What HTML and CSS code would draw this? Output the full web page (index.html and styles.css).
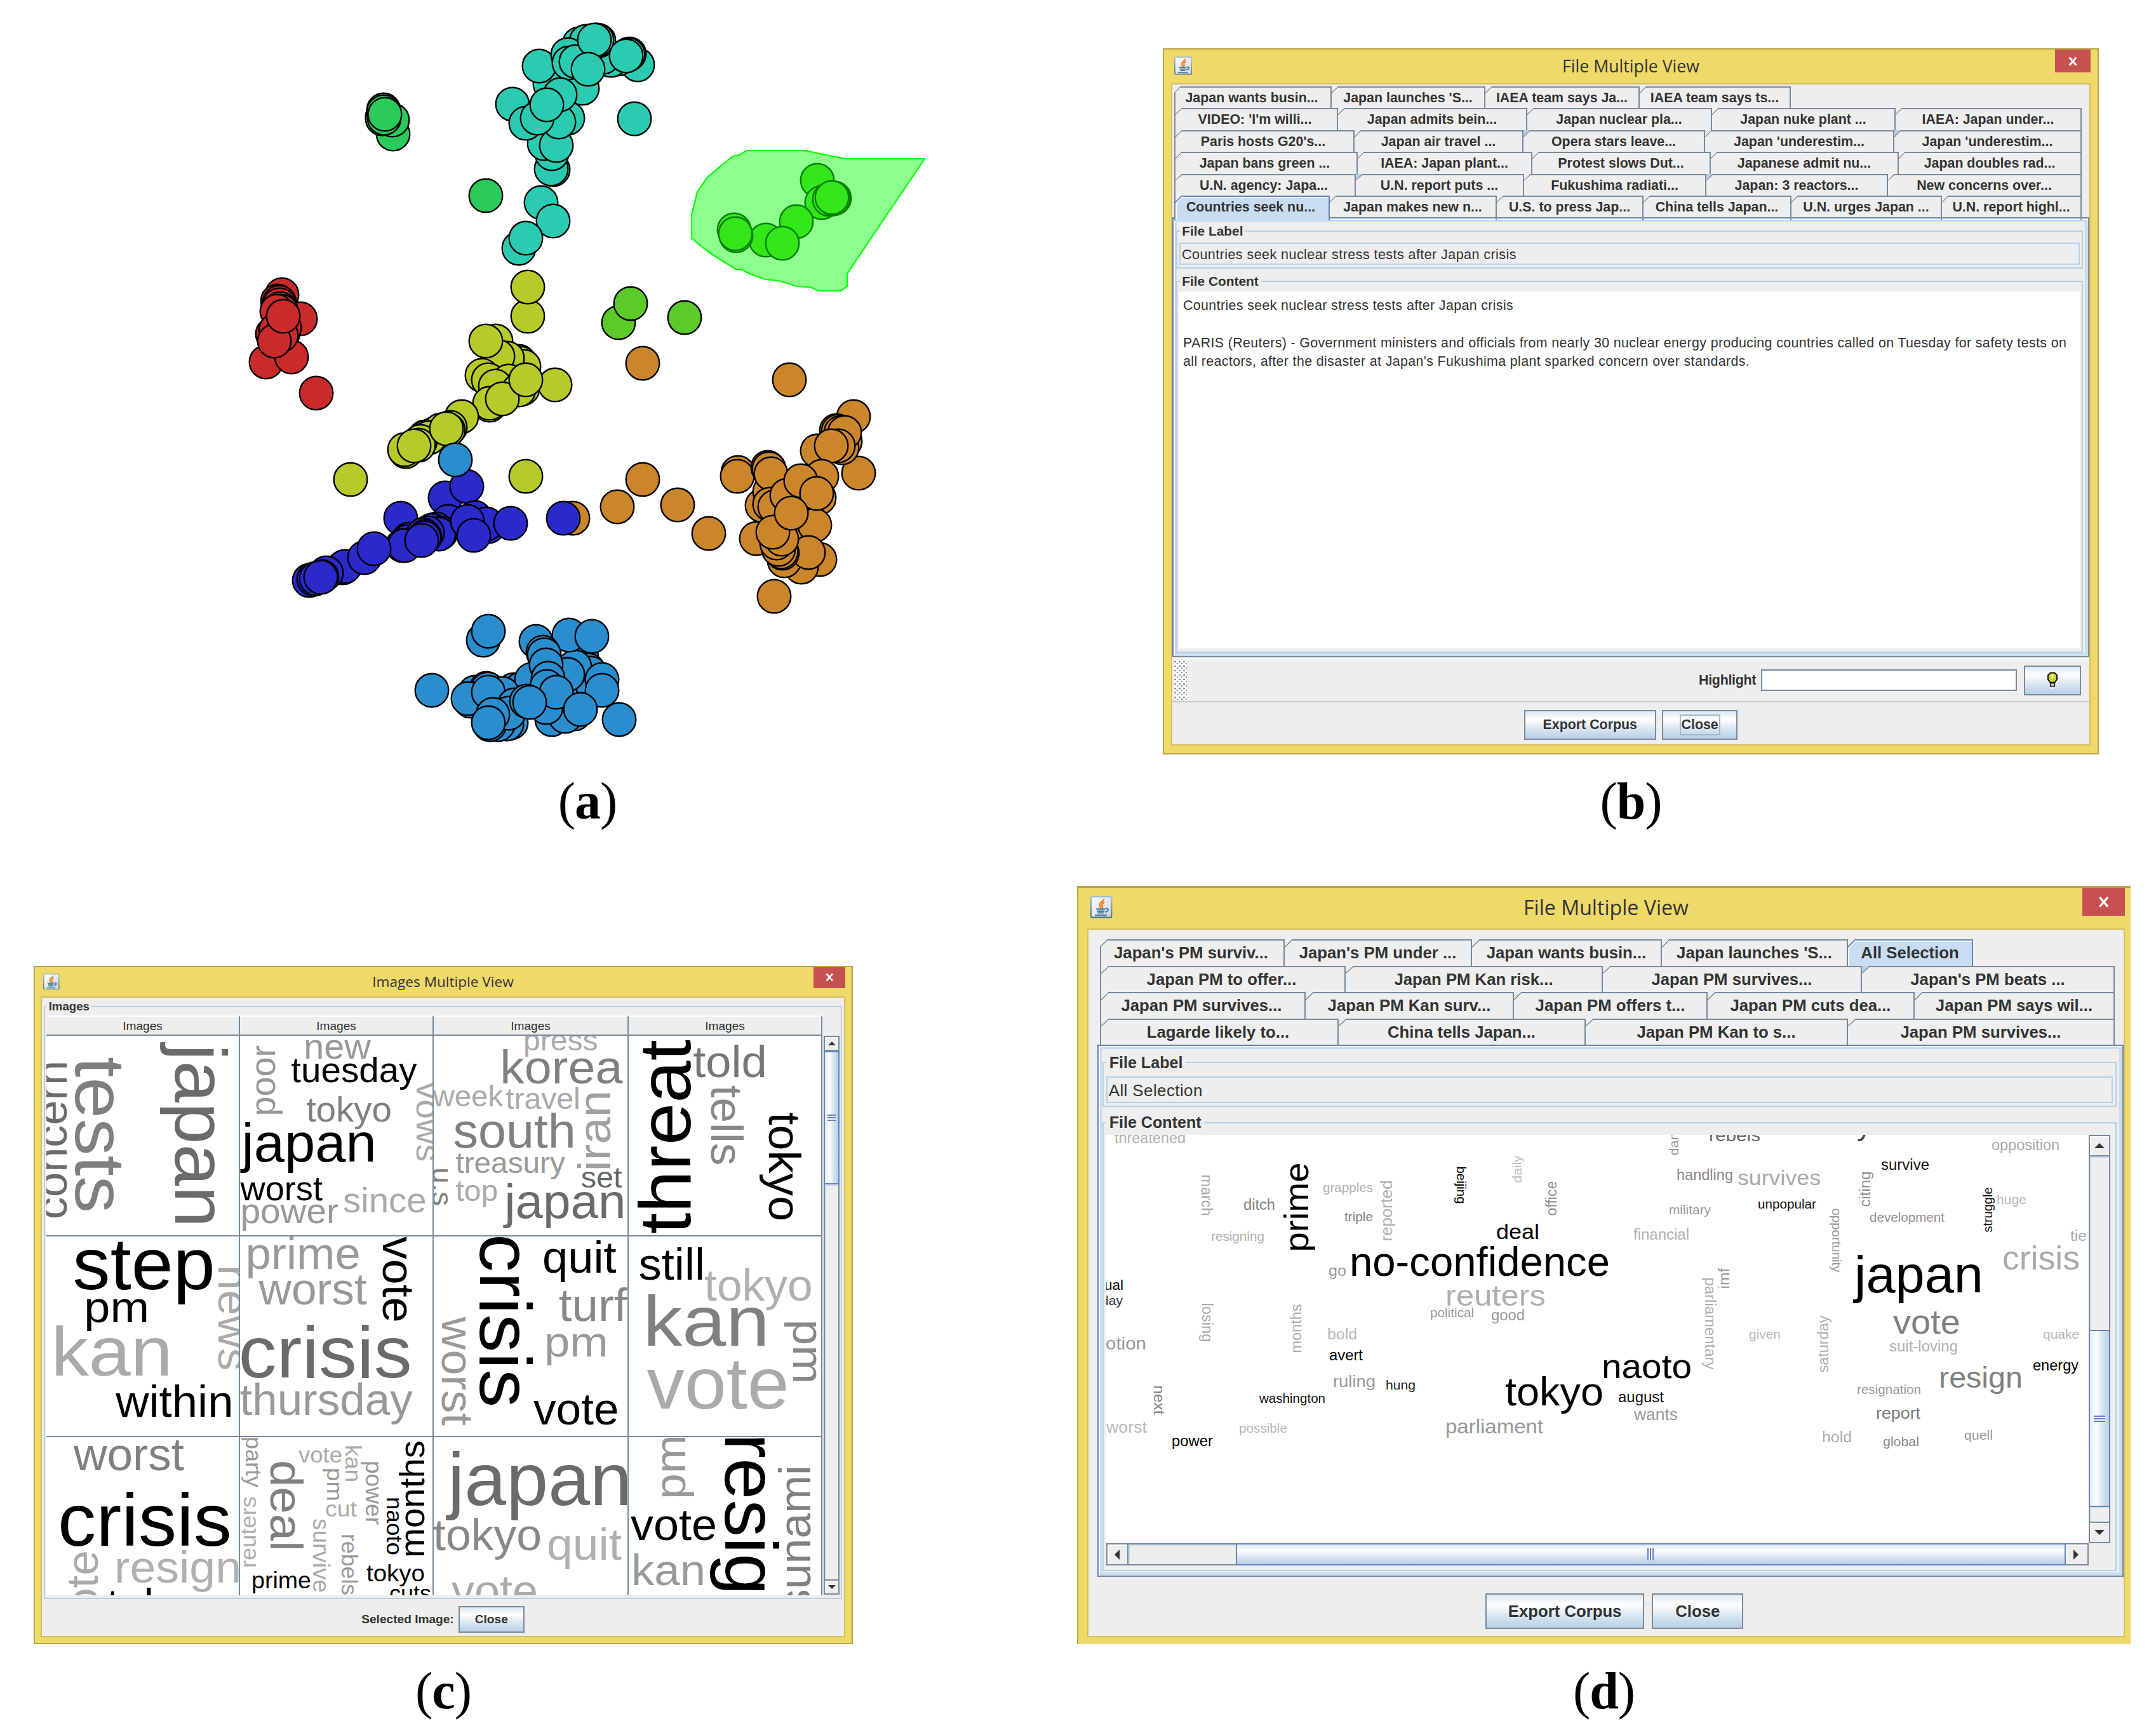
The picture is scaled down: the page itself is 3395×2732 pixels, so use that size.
FILE: index.html
```html
<!DOCTYPE html>
<html lang="en">
<head>
    <meta charset="UTF-8">
    <meta name="viewport" content="width=device-width, initial-scale=1.0">
    <title>Multiple View</title>
    <link rel="stylesheet" href="styles.css">
</head>
<body>
    <!-- shared icons -->
    <svg class="defs" width="0" height="0">
        <defs>
            <linearGradient id="javaBg" x1="0" y1="0" x2="1" y2="1">
                <stop offset="0" stop-color="#ffffff"/>
                <stop offset="1" stop-color="#cdd5dc"/>
            </linearGradient>
            <linearGradient id="javaEdge" x1="0" y1="0" x2="0" y2="1">
                <stop offset="0" stop-color="#a9bccb"/>
                <stop offset="1" stop-color="#4a6f8f"/>
            </linearGradient>
        </defs>
        <symbol id="java" viewBox="0 0 16 16">
            <rect x=".5" y=".5" width="15" height="15" rx="1" fill="url(#javaBg)" stroke="url(#javaEdge)"/>
            <path d="M9.800 2.200C9.400 4 6.200 4.800 6.600 6.600c.2.8.9 1.300.8 2.200M10.200 4.400C8.600 5.200 8 6 8.600 7c.5.8.1 1.300-.4 1.800" fill="none" stroke="#e8822a" stroke-width="1.200"/>
            <path d="M4.300 9.500h6.400M4.800 11h5.400M5.300 12.200h4.300M3.200 14h8.800M11 9.200c2.600-.6 2.400 2-.4 2.300" fill="none" stroke="#5382a1" stroke-width="1.100"/>
        </symbol>
        <symbol id="bulb" viewBox="0 0 12 16">
            <path d="M4 .8h4L10.200 3v4L8 10H4L1.800 7V3z" fill="#d3d32c" stroke="#111" stroke-width="1.200"/>
            <path d="M5 2.500h2v3H5z" fill="#f7f7b0"/>
            <path d="M4 10.500h4v3H4z" fill="#e8c8b8" stroke="#222" stroke-width="1"/>
            <path d="M4.500 15.200h3" stroke="#fff" stroke-width="1"/>
        </symbol>
        <symbol id="close" viewBox="0 0 10 10">
            <path d="M1.500 1l7 8M8.500 1l-7 8" stroke="#fff" stroke-width="1.900"/>
        </symbol>
    </svg>

    <div class="figures">
        <figure class="fig-a">
            <svg id="plot" class="plot" viewBox="380 0 1090 1188">
                <polygon class="lasso" points="1176,237 1267,237 1331,250 1456,250 1334,431 1334,451 1324,458 1289,458 1276,452 1255,451 1226,442 1205,440 1180,431 1169,425 1159,424 1144,415 1119,399 1103,387 1089,375 1089,339 1098,302 1114,279 1134,262 1154,246 1164,244"/>
            </svg>
            <figcaption>(<b>a</b>)</figcaption>
        </figure>

        <figure class="fig-b">
            <div class="window">
                <div class="titlebar">
                    <svg class="app-icon"><use href="#java"/></svg>
                    <span class="title">File Multiple View</span>
                    <span class="close"><svg><use href="#close"/></svg></span>
                </div>
                <div class="client">
                    <div class="tabs">
                        <div class="row b1"><span class="tab">Japan wants busin...</span><span class="tab">Japan launches 'S...</span><span class="tab">IAEA team says Ja...</span><span class="tab">IAEA team says ts...</span></div>
                        <div class="row b2"><span class="tab">VIDEO: 'I'm willi...</span><span class="tab">Japan admits bein...</span><span class="tab">Japan nuclear pla...</span><span class="tab">Japan nuke plant ...</span><span class="tab">IAEA: Japan under...</span></div>
                        <div class="row b3"><span class="tab">Paris hosts G20's...</span><span class="tab">Japan air travel ...</span><span class="tab tint">Opera stars leave...</span><span class="tab">Japan 'underestim...</span><span class="tab tint">Japan 'underestim...</span></div>
                        <div class="row b4"><span class="tab">Japan bans green ...</span><span class="tab">IAEA: Japan plant...</span><span class="tab">Protest slows Dut...</span><span class="tab">Japanese admit nu...</span><span class="tab">Japan doubles rad...</span></div>
                        <div class="row b5"><span class="tab">U.N. agency: Japa...</span><span class="tab tint">U.N. report puts ...</span><span class="tab">Fukushima radiati...</span><span class="tab tint">Japan: 3 reactors...</span><span class="tab">New concerns over...</span></div>
                        <div class="row b6"><span class="tab active">Countries seek nu...</span><span class="tab">Japan makes new n...</span><span class="tab">U.S. to press Jap...</span><span class="tab">China tells Japan...</span><span class="tab">U.N. urges Japan ...</span><span class="tab">U.N. report highl...</span></div>
                    </div>
                    <div class="panel">
                        <fieldset class="label-box">
                            <legend>File Label</legend>
                            <div class="field">Countries seek nuclear stress tests after Japan crisis</div>
                        </fieldset>
                        <fieldset class="content-box">
                            <legend>File Content</legend>
                            <div class="article">
                                <p>Countries seek nuclear stress tests after Japan crisis</p>
                                <p class="lead">PARIS (Reuters) - Government ministers and officials from nearly 30 nuclear energy producing countries called on Tuesday for safety tests on</p>
                                <p>all reactors, after the disaster at Japan's Fukushima plant sparked concern over standards.</p>
                            </div>
                        </fieldset>
                    </div>
                    <div class="toolbar">
                        <span class="grip"></span>
                        <label>Highlight</label>
                        <span class="input"></span>
                        <span class="button bulb"><svg><use href="#bulb"/></svg></span>
                    </div>
                    <div class="buttons">
                        <span class="button export">Export Corpus</span>
                        <span class="button ok"><span class="focus">Close</span></span>
                    </div>
                </div>
            </div>
            <figcaption>(<b>b</b>)</figcaption>
        </figure>

        <figure class="fig-c">
            <div class="window">
                <div class="titlebar">
                    <svg class="app-icon"><use href="#java"/></svg>
                    <span class="title">Images Multiple View</span>
                    <span class="close"><svg><use href="#close"/></svg></span>
                </div>
                <div class="client">
                    <fieldset class="images-box">
                        <legend>Images</legend>
                        <div class="images">
                            <div class="table">
                                <div class="th">Images</div>
                                <div class="th">Images</div>
                                <div class="th">Images</div>
                                <div class="th">Images</div>
                                <div class="td"><svg data-cloud="c11" viewBox="74 1631 303 315"></svg></div>
                                <div class="td"><svg data-cloud="c12" viewBox="379 1631 303 315"></svg></div>
                                <div class="td"><svg data-cloud="c13" viewBox="684 1631 305 315"></svg></div>
                                <div class="td"><svg data-cloud="c14" viewBox="991 1631 303 315"></svg></div>
                                <div class="td"><svg data-cloud="c21" viewBox="74 1947 303 315"></svg></div>
                                <div class="td"><svg data-cloud="c22" viewBox="379 1947 303 315"></svg></div>
                                <div class="td"><svg data-cloud="c23" viewBox="684 1947 305 315"></svg></div>
                                <div class="td"><svg data-cloud="c24" viewBox="991 1947 303 315"></svg></div>
                                <div class="td"><svg data-cloud="c31" viewBox="74 2263 303 249"></svg></div>
                                <div class="td"><svg data-cloud="c32" viewBox="379 2263 303 249"></svg></div>
                                <div class="td"><svg data-cloud="c33" viewBox="684 2263 305 249"></svg></div>
                                <div class="td"><svg data-cloud="c34" viewBox="991 2263 303 249"></svg></div>
                            </div>
                            <div class="vbar">
                                <span class="arrow up"></span>
                                <span class="thumb"></span>
                                <span class="track"></span>
                                <span class="arrow down"></span>
                            </div>
                        </div>
                    </fieldset>
                    <div class="buttons">
                        <span>Selected Image:</span>
                        <span class="button ok">Close</span>
                    </div>
                </div>
            </div>
            <figcaption>(<b>c</b>)</figcaption>
        </figure>

        <figure class="fig-d">
            <div class="window">
                <div class="titlebar">
                    <svg class="app-icon"><use href="#java"/></svg>
                    <span class="title">File Multiple View</span>
                    <span class="close"><svg><use href="#close"/></svg></span>
                </div>
                <div class="client">
                    <div class="tabs">
                        <div class="row d1"><span class="tab">Japan's PM surviv...</span><span class="tab">Japan's PM under ...</span><span class="tab">Japan wants busin...</span><span class="tab">Japan launches 'S...</span><span class="tab active">All Selection</span></div>
                        <div class="row d2"><span class="tab">Japan PM to offer...</span><span class="tab">Japan PM Kan risk...</span><span class="tab">Japan PM survives...</span><span class="tab tint">Japan's PM beats ...</span></div>
                        <div class="row d3"><span class="tab">Japan PM survives...</span><span class="tab">Japan PM Kan surv...</span><span class="tab">Japan PM offers t...</span><span class="tab">Japan PM cuts dea...</span><span class="tab">Japan PM says wil...</span></div>
                        <div class="row d4"><span class="tab">Lagarde likely to...</span><span class="tab">China tells Japan...</span><span class="tab">Japan PM Kan to s...</span><span class="tab">Japan PM survives...</span></div>
                    </div>
                    <div class="panel">
                        <fieldset class="label-box">
                            <legend>File Label</legend>
                            <div class="field">All Selection</div>
                        </fieldset>
                        <fieldset class="content-box">
                            <legend>File Content</legend>
                            <div class="scrollpane">
                                <svg class="cloud" data-cloud="d" viewBox="1742 1787 1547 642"></svg>
                                <div class="vbar">
                                    <span class="arrow up"></span>
                                    <span class="track"></span>
                                    <span class="thumb"></span>
                                    <span class="track rest"></span>
                                    <span class="arrow down"></span>
                                </div>
                                <div class="hbar">
                                    <span class="arrow left"></span>
                                    <span class="track"></span>
                                    <span class="thumb"></span>
                                    <span class="arrow right"></span>
                                </div>
                            </div>
                        </fieldset>
                    </div>
                    <div class="buttons">
                        <span class="button export">Export Corpus</span>
                        <span class="button ok">Close</span>
                    </div>
                </div>
            </div>
            <figcaption>(<b>d</b>)</figcaption>
        </figure>
    </div>
    <script src="script.js"></script>
</body>
</html>
```
FILE: styles.css
```css
* {
    box-sizing: border-box;
}

body {
    margin: 0;
    background: white;
    font-family: "Liberation Sans", Arial, sans-serif;
    color: #333;
}

.defs {
    position: absolute;
}

.figures {
    display: grid;
    grid-template-columns: 1600px 1795px;
    grid-template-rows: 1395px 1337px;
    width: 3395px;
    height: 2732px;
    overflow: hidden;
}

figure {
    margin: 0;
}
.fig-a { margin-left: 380px; width: 1090px; }
.fig-b { margin: 76px 0 0 231px; width: 1474px; --u: 1.8px; }
.fig-c { margin: 126px 0 0 53px; width: 1290px; --u: 1.61px; }
.fig-d { margin-left: 96px; width: 1659px; --u: 2.165px; }

figcaption {
    margin-top: 24px;
    font: 82px/100px "Liberation Serif", serif;
    letter-spacing: -1px;
    text-align: center;
    color: black;
}

/* scatter plot */
.plot {
    display: block;
    width: 1090px;
    height: 1188px;
}
.lasso {
    fill: #8cff8c;
    stroke: #00ff00;
    stroke-width: 2.200;
}
.plot circle {
    stroke: black;
    stroke-width: 2.400;
}
.plot .selected circle {
    stroke: #007f00;
}

/* window frame */
.window {
    background: #efd969;
    border: 2px solid #b8a549;
    padding: 0 11px 12px;
    font-size: calc(var(--u) * 11.880);
    font-weight: bold;
}
.fig-b .window { height: 1112px; }
.fig-c .window { height: 1068px; padding: 0 10px 9px 9px; }
.fig-d .window { height: 1194px; border-width: 3px 0 0 2px; padding: 0 9px 11px 14px; }

.titlebar {
    display: grid;
    grid-template-columns: 1fr auto 1fr;
    height: 53px;
}
.fig-c .titlebar { height: 46px; }
.fig-d .titlebar { height: 64px; }

.app-icon {
    width: calc(var(--u) * 16);
    height: calc(var(--u) * 16);
    margin: calc(var(--u) * 6) 0 0 calc(var(--u) * 2.500);
}
.title {
    font: calc(var(--u) * 14.850)/calc(var(--u) * 28.600) "Open Sans", sans-serif;
    white-space: nowrap;
}
.fig-c .title {
    font-size: 22.600px;
}
.close {
    justify-self: end;
    display: flex;
    align-items: center;
    justify-content: center;
    width: calc(var(--u) * 31);
    height: calc(var(--u) * 20.200);
    background: #c75050;
}
.close svg {
    width: calc(var(--u) * 9);
    height: calc(var(--u) * 8.500);
}

.client {
    height: 1043px;
    background: #eee;
    border: 2px solid #d2bf5e;
}
.fig-c .client { height: 1009px; }
.fig-d .client { height: 1116px; }

/* tabs */
.tabs {
    padding: 3px 0 0 3px;
}
.fig-d .tabs { padding: 15px 0 0 18px; }

.row {
    display: grid;
    height: 34.400px;
    line-height: 32px;
}
.fig-d .row {
    height: 41.500px;
    line-height: 38px;
}
.b1 { grid-template-columns: 248px 242px 243px 238px; }
.b2 { grid-template-columns: 258px 298px 291px 289px 293px; }
.b3 { grid-template-columns: 284px 266px 286px 298px 295px; }
.b4 { grid-template-columns: 289px 275px 281px 296px 288px; }
.b5 { grid-template-columns: 286px 265px 287px 286px 305px; }
.b6 { grid-template-columns: 245px 263px 231px 233px 237px 220px; }
.d1 { grid-template-columns: 291px 295px 299px 293px 197px; }
.d2 { grid-template-columns: 387px 405px 408px 398px; }
.d3 { grid-template-columns: 324px 328px 305px 326px 315px; }
.d4 { grid-template-columns: 376px 389px 413px 420px; }

.tab {
    position: relative;
    border-top: 2px solid #7a8a99;
    border-right: 2px solid #7a8a99;
    text-align: center;
    white-space: pre;
}
.tab:first-child {
    border-left: 2px solid #7a8a99;
    padding-right: 4px;
}
/* cut top left corner */
.tab::before {
    content: "";
    position: absolute;
    left: 0;
    top: -2px;
    width: calc(var(--u) * 6);
    height: calc(var(--u) * 6);
    background: linear-gradient(to bottom right, #eee 44%, #7a8a99 46%, #7a8a99 52%, transparent 54%);
}
.row:first-child .tab:first-child::before {
    left: -2px;
}
.tab.tint::before {
    background: linear-gradient(to bottom right, #b8cfe5 44%, #7a8a99 46%, #7a8a99 52%, transparent 54%);
}
.tab.active {
    background: #c8ddf2;
    border-color: #6382bf;
    box-shadow: inset 2px 2px 0 white;
}
.tab.active::before {
    background: linear-gradient(to bottom right, #eee 40%, #6382bf 43%, #6382bf 50%, white 52%, white 58%, transparent 60%);
}
.b6 .tab.active {
    height: 39px;
    z-index: 1;
}

.panel {
    height: 693px;
    padding: 8px 8px 0 4px;
    border: 2px solid #6382bf;
    border-right-color: #7a8a99;
    border-bottom-color: #7a8a99;
    box-shadow: inset 2px 2px 0 white, inset 0 0 0 5px #c8ddf2;
}
.fig-d .panel {
    width: 1616px;
    height: 838px;
    margin-left: 14px;
    padding: 12px 9px 0 6px;
}

fieldset {
    min-width: 0;
    margin: 0;
    border: 2px solid #b8cfe5;
    padding: calc(var(--u) * 3.200) calc(var(--u) * 1.700) 0;
}
legend {
    height: calc(var(--u) * 13.300);
    margin-left: calc(var(--u) * .3);
    padding: 0 calc(var(--u) * 2);
    font-size: calc(var(--u) * 11.600);
    line-height: calc(var(--u) * 13.300);
}
.label-box {
    height: calc(var(--u) * 39);
}
.field {
    height: calc(var(--u) * 19.400);
    padding-left: 2px;
    border: 2px solid #b8cfe5;
    line-height: calc(var(--u) * 18.600);
    font-weight: normal;
    font-size: calc(var(--u) * 12);
    letter-spacing: .4px;
}
.content-box {
    height: 597px;
    margin-top: 8px;
    padding-top: 5px;
}
.fig-d .content-box {
    height: 721px;
    margin-top: 10px;
}
.article {
    height: 562px;
    padding: 8px 6px;
    background: white;
    font-weight: normal;
    letter-spacing: .370px;
    line-height: 29.200px;
    white-space: nowrap;
}
.article p {
    margin: 0;
}
.article .lead {
    margin-top: 29px;
}

.toolbar {
    display: flex;
    align-items: center;
    height: 68px;
    margin-top: 1px;
    padding-right: 13px;
    border-top: 2px solid white;
}
.grip {
    align-self: stretch;
    width: 22px;
    margin: 2px auto 2px 3px;
    background: radial-gradient(circle at 1.500px 2px, #8a97a5 1.200px, transparent 1.600px) 0 0/7px 7px,
        radial-gradient(circle at 5px 5px, #8a97a5 1.200px, white 1.600px) 0 0/7px 7px;
}
.toolbar label {
    margin-right: 8px;
    letter-spacing: -.3px;
}
.input {
    width: 403px;
    height: 34px;
    margin-right: 11px;
    background: white;
    border: 2px solid #7a8a99;
}

.button {
    display: flex;
    align-items: center;
    justify-content: center;
    height: calc(var(--u) * 26);
    border: 2px solid #7a8a99;
    background: linear-gradient(#dde8f3, #ffffff 30%, #dde8f3 60%, #b8cfe5);
}
.button.bulb { width: 90px; }
.bulb svg { width: 20px; height: 27px; }
.button.export { width: calc(var(--u) * 115.700); }
.button.ok { width: calc(var(--u) * 66.400); }
.focus {
    padding: 2px 1px;
    border: 2px solid #a3b8cc;
}

.buttons {
    display: flex;
    justify-content: center;
    align-items: center;
    gap: 9px;
    padding-top: 12px;
    border-top: 2px solid #ccc;
}
.fig-c .buttons { gap: 7px; padding-top: 11px; border: none; }
.fig-c .button.ok { width: 104px; }
.fig-d .buttons { gap: 12px; padding: 26px 0 0 26px; border: none; }

/* image table */
.images-box {
    height: 944px;
    margin: 3px 3px 0;
    padding: 4px 2px 0;
}
.images {
    display: flex;
    height: 913px;
}
.table {
    display: grid;
    grid-template-columns: 305px 305px 307px 305px;
    grid-template-rows: 32px 316px 316px 249px;
    width: 1222px;
    background: white;
}
.th {
    background: #eee;
    border-top: 2px solid white;
    border-right: 2px solid #7a8a99;
    border-bottom: 2px solid #7a8a99;
    font-weight: normal;
    line-height: 29px;
    text-align: center;
}
.td {
    overflow: hidden;
    border-right: 2px solid #7a8a99;
    border-bottom: 2px solid #7a8a99;
}
.td:nth-child(n+13) {
    border-bottom: none;
}
.td svg {
    display: block;
    width: 100%;
    height: 100%;
}

/* scrollbars */
.scrollpane {
    display: grid;
    grid-template-columns: 1547px 34px;
    grid-template-rows: 643px 35px;
    width: 1581px;
}
.cloud {
    width: 1547px;
    height: 643px;
    background: white;
}
.vbar, .hbar {
    display: flex;
    border: 2px solid #7a8a99;
    background: #eee;
}
.vbar {
    flex-direction: column;
}
.fig-c .vbar {
    width: 25px;
    height: 880px;
    margin: 32px 0 0 2px;
}
.track {
    flex: 1;
    box-shadow: inset 2px 2px 0 #c8ddf2;
}
.thumb {
    position: relative;
    margin: 0 -2px;
    border: 2px solid #6382bf;
    background: linear-gradient(to right, #dde8f3, #ffffff 30%, #dde8f3 60%, #b8cfe5);
}
.hbar .thumb {
    width: 1307px;
    margin: -2px 0;
    background: linear-gradient(#dde8f3, #ffffff 30%, #dde8f3 60%, #b8cfe5);
}
.fig-c .thumb { height: 210px; }
.fig-d .vbar .thumb { height: 279px; }
.fig-d .track.rest { flex: 0 0 23px; }
.fig-d .hbar .track { flex: 0 0 169px; }

/* ridges in the middle of the thumb */
.thumb::after {
    content: "";
    position: absolute;
    left: 20%;
    right: 20%;
    top: 50%;
    height: 10px;
    margin-top: -5px;
    background: repeating-linear-gradient(#6382bf 0 2px, white 2px 4px);
}
.hbar .thumb::after {
    left: 50%;
    right: auto;
    top: 20%;
    bottom: 20%;
    width: 10px;
    height: auto;
    margin: 0 0 0 -5px;
    background: repeating-linear-gradient(to right, #6382bf 0 2px, white 2px 4px);
}

.arrow {
    display: flex;
    align-items: center;
    justify-content: center;
    height: 22px;
    box-shadow: inset 2px 2px 0 white;
}
.fig-d .arrow { height: 32px; }
.fig-d .hbar .arrow { width: 33px; height: auto; }
.arrow.up { border-bottom: 2px solid #7a8a99; }
.arrow.down { border-top: 2px solid #7a8a99; }
.arrow.left { border-right: 2px solid #7a8a99; }
.arrow::before {
    content: "";
    border: calc(var(--u) * 4) solid transparent;
}
.arrow.up::before { border-top: none; border-bottom-color: #333; }
.arrow.down::before { border-bottom: none; border-top-color: #333; }
.arrow.left::before { border-left: none; border-right-color: #333; }
.arrow.right::before { border-right: none; border-left-color: #333; }
```
FILE: script.js
```js
const NS = 'http://www.w3.org/2000/svg';

// [fill, [x, y], ...] drawn back to front
const groups = [
    ['#2acb5a', [619,211],[618,189],[604,173],[602,184],[602,187],[605,186],[604,176],[606,180],[765,308]],
    ['#2acbb1', [1004,102],[917,139],[866,132],[849,104],[912,69],[923,65],[894,86],[896,99],[973,93],[962,95],[950,90],[943,64],[940,63],[991,85],[989,86],[907,97],[936,63],[986,88],[926,109],[999,187],[871,267],[868,266],[869,242],[857,226],[876,229],[807,164],[894,186],[828,194],[880,192],[846,186],[882,149],[861,165],[852,319],[871,348],[817,391],[828,375]],
    ['#5ccb2a', [974,508],[993,478],[1078,500]],
    ['#cb2a2a', [444,464],[473,502],[419,570],[459,562],[437,474],[440,476],[440,480],[441,486],[443,490],[436,490],[429,526],[434,520],[446,524],[448,516],[443,528],[432,537],[446,498],[498,619]],
    ['#b5cb2a', [831,498],[831,452],[781,537],[817,569],[820,572],[825,577],[799,564],[784,561],[765,537],[759,591],[769,598],[801,600],[780,608],[823,612],[817,614],[874,606],[771,638],[771,635],[791,628],[828,598],[727,656],[669,688],[672,688],[684,683],[694,677],[709,673],[706,677],[676,689],[662,695],[639,711],[637,708],[659,701],[652,702],[703,675],[552,755],[828,750]],
    ['#2a2acb', [701,784],[735,766],[631,816],[706,821],[748,815],[769,829],[766,825],[804,824],[687,833],[680,835],[694,839],[691,841],[736,821],[673,839],[644,849],[641,853],[634,859],[666,842],[669,845],[637,859],[668,847],[664,851],[746,843],[540,894],[543,892],[574,878],[589,864],[514,902],[487,914],[494,912],[498,911],[507,908],[505,909]],
    ['#2a8dce', [717,724]],
    ['#cb852a', [902,816],[1012,572],[1243,598],[1012,755],[972,798],[1067,795],[1116,840],[1219,939],[1344,656],[1352,745],[1317,678],[1320,679],[1324,681],[1331,695],[1326,705],[1330,681],[1287,710],[1320,702],[1309,702],[1162,744],[1161,750],[1209,736],[1211,738],[1200,796],[1212,774],[1214,746],[1240,815],[1262,852],[1294,750],[1212,794],[1290,784],[1220,798],[1239,780],[1191,848],[1291,881],[1262,893],[1235,883],[1283,827],[1273,870],[1232,871],[1230,869],[1226,865],[1223,855],[1231,849],[1261,757],[1286,777],[1217,838],[1246,808]],
    ['#2a2acb', [887,816]],
    ['#2a8dce', [761,1008],[769,994],[680,1087],[916,1035],[926,1055],[930,1060],[912,1080],[885,1100],[905,1050],[844,1010],[896,1000],[932,1002],[975,1133],[948,1070],[948,1087],[809,1086],[820,1085],[837,1070],[894,1062],[855,1027],[857,1031],[860,1047],[863,1068],[861,1081],[748,1090],[766,1084],[768,1085],[791,1092],[741,1104],[737,1100],[769,1090],[869,1133],[905,1124],[894,1120],[890,1128],[860,1114],[805,1138],[798,1140],[784,1141],[771,1141],[810,1110],[801,1123],[776,1125],[769,1138],[876,1090],[829,1104],[834,1106],[914,1117]]
];
const selected = ['#33e619', [1287,284],[1294,319],[1306,314],[1314,312],[1312,313],[1310,311],[1254,349],[1206,378],[1232,383],[1156,362],[1159,371],[1158,368]];

// [text, x, y, size, length, gray, angle]
const clouds = {
    c11: [['concern',106,1921,70,251,'#6b6b6b',-90],['tests',120,1664,112,247,'#7f7f7f',90],['japan',277,1644,115,290,'#6b6b6b',90]],
    c12: [['poor',434,1758,55,112,'#999',-90],['new',479,1667,56,106,'#999'],['tuesday',459,1704,56,199,'#000'],['tokyo',483,1766,55,135,'#808080'],['vows',657,1704,54,126,'#aaa',90],['japan',381,1830,86,213,'#000'],['worst',379,1891,54,130,'#000'],['power',379,1927,55,155,'#999'],['since',541,1910,55,132,'#aaa']],
    c13: [['press',825,1654,47,118,'#aaa'],['korea',788,1706,75,194,'#808080'],['week',682,1742,47,111,'#aaa'],['travel',797,1746,47,118,'#aaa'],['south',714,1808,76,194,'#808080'],['iran',962,1845,73,128,'#a0a0a0',-90],['treasury',718,1848,47,173,'#999'],['u.s',682,1839,45,61,'#808080',90],['set',916,1871,47,65,'#666'],['top',718,1892,47,67,'#aaa'],['japan',795,1919,77,192,'#6b6b6b']],
    c14: [['threat',1088,1944,116,307,'#000',-90],['told',1092,1696,70,117,'#777'],['tells',1121,1709,70,127,'#888',90],['tokyo',1212,1752,71,172,'#000',90]],
    c21: [['step',115,2030,115,225,'#000'],['pm',133,2082,68,103,'#000'],['news',345,1992,69,167,'#aaa',90],['kan',81,2167,110,192,'#aaa'],['within',183,2232,71,186,'#000']],
    c22: [['prime',387,1998,70,182,'#999'],['vote',604,1947,70,136,'#000',90],['worst',408,2054,71,171,'#999'],['crisis',376,2170,116,274,'#6b6b6b'],['thursday',378,2229,71,273,'#999']],
    c23: [['crisis',757,1943,116,274,'#000',90],['quit',855,2004,70,117,'#000'],['turf',881,2080,72,108,'#888'],['pm',858,2137,67,101,'#999'],['worst',697,2074,71,172,'#999',90],['vote',841,2244,70,135,'#000']],
    c24: [['still',1006,2015,70,105,'#000'],['tokyo',1110,2048,70,171,'#b0b0b0'],['kan',1013,2120,112,200,'#808080'],['pm',1250,2078,68,102,'#888',90],['vote',1019,2219,116,225,'#aaa']],
    c31: [['worst',117,2315,72,174,'#808080'],['crisis',92,2434,116,274,'#000'],['vote',155,2576,70,135,'#aaa',-90],['resign',181,2492,70,200,'#b0b0b0'],['tokyo',169,2551,70,168,'#000']],
    c32: [['party',388,2262,35,80,'#999',90],['reuters',404,2469,35,113,'#b0b0b0',-90],['deal',427,2299,72,144,'#808080',90],['vote',471,2303,35,69,'#aaa'],['kan',545,2275,35,59,'#aaa',90],['pm',516,2311,35,53,'#999',90],['cut',513,2388,35,50,'#aaa'],['power',577,2300,36,101,'#999',90],['survive',494,2391,36,117,'#aaa',90],['rebels',539,2415,35,97,'#999',90],['naoto',610,2357,35,92,'#000',90],['months',669,2453,55,185,'#000',-90],['prime',397,2501,36,94,'#000'],['tokyo',578,2490,36,92,'#000'],['cuts',614,2521,35,66,'#000']],
    c33: [['japan',706,2370,116,290,'#6b6b6b'],['tokyo',683,2441,70,171,'#888'],['quit',862,2456,70,118,'#b0b0b0'],['vote',712,2529,70,136,'#aaa']],
    c34: [['pm',1080,2361,68,102,'#999',-90],['vote',994,2425,70,136,'#000'],['kan',995,2496,69,117,'#999'],['resign',1143,2257,117,320,'#000',90],['tsunami',1277,2558,71,251,'#808080',-90]],
    d: [
        ['threatened',1755,1799,23.300,112,'#b0b0b0'],['march',1892,1849,23,65,'#aaa',90],['ditch',1958,1904,23,50,'#808080'],['resigning',1907,1953,20.300,84,'#b0b0b0'],
        ['prime',2060,1971,54,141,'#000',-90],['grapples',2083,1876,20.300,79,'#b0b0b0'],['triple',2117,1922,20.300,45,'#808080'],['reported',2192,1954,25,96,'#b0b0b0',-90],
        ['beijing',2294,1836,20.300,59,'#000',90],['daily',2396,1862,20.300,43,'#c0c0c0',-90],['office',2451,1914,23,55,'#909090',-90],['deal',2356,1950,33,68,'#000'],
        ['no-confidence',2125,2008,64,410,'#000'],['go',2092,2008,23,28,'#999'],['reuters',2276,2055,47,158,'#b0b0b0'],['political',2252,2073,20.300,69,'#999'],['good',2348,2078,23,53,'#999'],
        ['ual',1739,2030,22,30,'#000'],['day',1734,2054,20.300,34,'#333'],['losing',1893,2051,23,62,'#aaa',90],['months',2049,2130,23,77,'#aaa',-90],['bold',2090,2108,23,47,'#b8b8b8'],
        ['avert',2093,2141,23,53,'#000'],['otion',1741,2124,28,64,'#999'],['ruling',2099,2183,26,67,'#999'],['hung',2182,2187,20.300,47,'#222'],['next',1817,2181,23,46,'#808080',90],
        ['washington',1983,2208,20.300,104,'#111'],['tokyo',2370,2212,63,155,'#000'],['naoto',2522,2169,54,142,'#000'],['august',2548,2207,23,72,'#111'],['wants',2573,2235,26,69,'#999'],
        ['parliament',2276,2256,31,154,'#999'],['worst',1742,2255,26,64,'#b8b8b8'],['power',1845,2276,23,65,'#000'],['possible',1951,2255,20.300,76,'#b8b8b8'],
        ['dan',2643,1819,20.300,36,'#999',-90],['rebels',2691,1796,28.500,81,'#666'],['y',2924,1786,46,23,'#444'],['opposition',3136,1810,23,107,'#aaa'],['handling',2640,1857,23,89,'#888'],
        ['survives',2736,1865,34,131,'#aaa'],['survive',2962,1841,23,76,'#111'],['citing',2945,1900,23,56,'#909090',-90],['military',2628,1911,20.300,66,'#999'],['unpopular',2768,1902,20.300,92,'#111'],
        ['development',2944,1923,20.300,118,'#909090'],['struggle',3137,1940,20.300,71,'#111',-90],['huge',3144,1895,20.300,47,'#b8b8b8'],['opportunity',2885,1902,20.300,101,'#999',90],
        ['financial',2572,1951,23,88,'#b0b0b0'],['imf',2723,2029,23,33,'#999',-90],['parliamentary',2685,2011,23,145,'#b0b0b0',90],['given',2754,2107,20.300,50,'#b8b8b8'],['saturday',2879,2161,23,90,'#b0b0b0',-90],
        ['japan',2920,2034,82,203,'#000'],['vote',2981,2099,53,106,'#808080'],['suit-loving',2975,2127,23,108,'#b0b0b0'],['crisis',3153,1998,51,122,'#aaa'],['tie',3260,1953,23,26,'#aaa'],
        ['quake',3217,2107,20.300,57,'#b8b8b8'],['energy',3201,2157,23,72,'#000'],['resign',3053,2184,46,132,'#808080'],['resignation',2924,2194,20.300,101,'#999'],['report',2954,2233,26,70,'#777'],
        ['hold',2869,2270,23,47,'#aaa'],['global',2965,2276,20.300,57,'#888'],['quell',3093,2266,20.300,45,'#999']
    ]
};

function add(parent, name, attrs) {
    const el = document.createElementNS(NS, name);
    for (const key in attrs) {
        el.setAttribute(key, attrs[key]);
    }
    parent.appendChild(el);
    return el;
}

function drawGroup([fill, ...points], cls) {
    const g = add(document.getElementById('plot'), 'g', { fill: fill, class: cls });
    points.forEach(([x, y]) => add(g, 'circle', { cx: x, cy: y, r: 26.3 }));
}

groups.forEach(group => drawGroup(group, 'points'));
drawGroup(selected, 'selected');

document.querySelectorAll('[data-cloud]').forEach(svg => {
    clouds[svg.dataset.cloud].forEach(([text, x, y, size, length, color, angle]) => {
        const el = add(svg, 'text', {
            transform: `translate(${x} ${y}) rotate(${angle || 0})`,
            'font-size': size,
            'font-weight': 'normal',
            textLength: length,
            lengthAdjust: 'spacingAndGlyphs',
            fill: color
        });
        el.textContent = text;
    });
});
```
